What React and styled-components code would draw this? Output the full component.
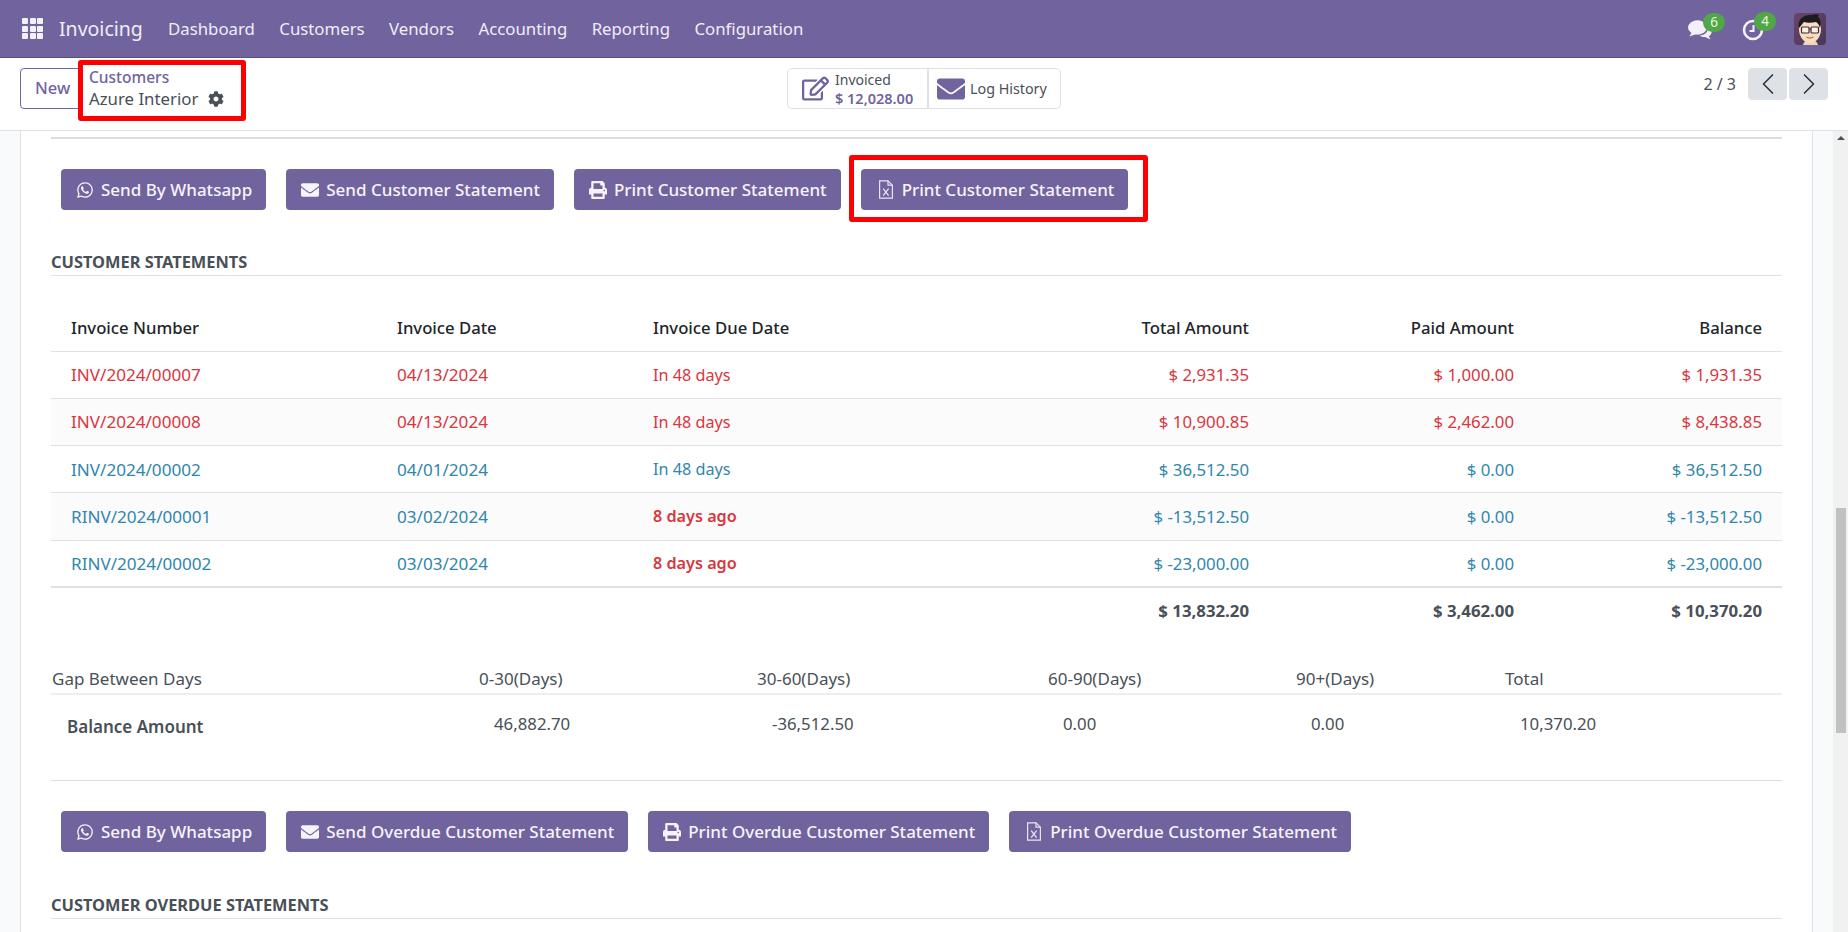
import React from "react";
import styled, { createGlobalStyle } from "styled-components";
import { FaWhatsapp, FaEnvelope, FaPrint, FaCog, FaRegEdit } from "react-icons/fa";
import { LuChevronLeft, LuChevronRight } from "react-icons/lu";

const PURPLE = "#71639e";
const RED = "#d9363e";
const BLUE = "#2f87ab";

const GlobalStyle = createGlobalStyle`
  html, body { margin: 0; padding: 0; height: 100%; overflow: hidden; background: #fff; }
  body { font-family: "Noto Sans", "Open Sans", sans-serif; color: #495057; }
  * { box-sizing: border-box; }
`;

const statementRows = [
  { no: "INV/2024/00007", date: "04/13/2024", due: "In 48 days", total: "$ 2,931.35", paid: "$ 1,000.00", balance: "$ 1,931.35", tone: RED },
  { no: "INV/2024/00008", date: "04/13/2024", due: "In 48 days", total: "$ 10,900.85", paid: "$ 2,462.00", balance: "$ 8,438.85", tone: RED },
  { no: "INV/2024/00002", date: "04/01/2024", due: "In 48 days", total: "$ 36,512.50", paid: "$ 0.00", balance: "$ 36,512.50", tone: BLUE },
  { no: "RINV/2024/00001", date: "03/02/2024", due: "8 days ago", late: true, total: "$ -13,512.50", paid: "$ 0.00", balance: "$ -13,512.50", tone: BLUE },
  { no: "RINV/2024/00002", date: "03/03/2024", due: "8 days ago", late: true, total: "$ -23,000.00", paid: "$ 0.00", balance: "$ -23,000.00", tone: BLUE },
];

const gapHeads = ["0-30(Days)", "30-60(Days)", "60-90(Days)", "90+(Days)", "Total"];
const gapValues = ["46,882.70", "-36,512.50", "0.00", "0.00", "10,370.20"];

const ExcelIcon = () => (
  <ExcelSvg width="16" height="19" viewBox="0 0 16 19" fill="none" stroke="#e8e5f1" strokeWidth="1.2">
    <path d="M1.6 .8h8.4l4.4 4.4v13h-12.8z" />
    <path d="M10 .8v4.4h4.4" />
    <path d="M5.2 8.6l5.4 7M10.6 8.6l-5.4 7" strokeWidth="1.3" />
  </ExcelSvg>
);

const ChatIcon = () => (
  <svg width="24" height="20" viewBox="0 0 24 20" fill="#f3f0f8">
    <ellipse cx="9.5" cy="7.5" rx="9.5" ry="7.2" />
    <path d="M4 12l-2.6 4.4 7-2.4z" />
    <path d="M19 6.8c2.8 1 4.6 3 4.6 5.2 0 1.7-1 3.1-2.7 4.2l1.6 3.2-5.4-2.4c-2.2 0-4.2-.6-5.6-1.6 5 .2 9.4-3.2 7.5-8.4z" />
  </svg>
);

const ClockIcon = () => (
  <svg width="22" height="22" viewBox="0 0 22 22" fill="none" stroke="#f3f0f8">
    <circle cx="11" cy="11" r="9" strokeWidth="2.6" />
    <path d="M11.5 6v6H7.5" strokeWidth="2" />
  </svg>
);

const AvatarDrawing = () => (
  <svg width="32" height="32" viewBox="0 0 32 32">
    <defs>
      <linearGradient id="avatarBg" x1="0" y1="0" x2="1" y2="1">
        <stop offset="0" stopColor="#6b4468" />
        <stop offset="1" stopColor="#4a3658" />
      </linearGradient>
    </defs>
    <rect width="32" height="32" rx="4" fill="url(#avatarBg)" />
    <path d="M9 32c1-4 3-5 7-5s7 1 8 5z" fill="#f4d2b6" />
    <path d="M5 16c0-6 4-9 11-9s11 3 11 9c0 8-5 14-11 14S5 24 5 16z" fill="#fadcc2" />
    <path d="M5 15C3 7 9 1 18 2c2-1 5-1 7 0l-1 2c3 2 3 7 2 11-1-3-2-5-4-6-4 1-9 1-12 0-2 2-3 4-5 6z" fill="#1d1b1e" />
    <g fill="#fff" fillOpacity=".6" stroke="#33302f" strokeWidth="1.2">
      <rect x="7.5" y="14" width="7.5" height="6" rx="1" />
      <rect x="17" y="14" width="7.5" height="6" rx="1" />
    </g>
    <path d="M15 16h2" stroke="#33302f" strokeWidth="1" />
    <path d="M12.5 24c2 1.4 5 1.4 7 0" stroke="#a4552f" strokeWidth="1" fill="none" />
  </svg>
);

const ActionBar = ({ labels }) => (
  <ButtonRow>
    <ActionButton><FaWhatsapp size={18} />Send By Whatsapp</ActionButton>
    <ActionButton><FaEnvelope size={18} />{labels[0]}</ActionButton>
    <ActionButton><FaPrint size={18} />{labels[1]}</ActionButton>
    <ActionButton $highlight={labels[3]}><ExcelIcon />{labels[2]}</ActionButton>
  </ButtonRow>
);

const App = () => {
  return (
    <Page>
      <GlobalStyle />
      <Navbar>
        <AppsGrid>
          {Array.from({ length: 9 }).map((_, i) => <i key={i} />)}
        </AppsGrid>
        <Brand>Invoicing</Brand>
        <Menu>
          {["Dashboard", "Customers", "Vendors", "Accounting", "Reporting", "Configuration"].map((m) => (
            <MenuItem key={m}>{m}</MenuItem>
          ))}
        </Menu>
        <Systray>
          <TrayIcon $w={38}><ChatIcon /><Badge $left={15}>6</Badge></TrayIcon>
          <TrayIcon $w={36}><ClockIcon /><Badge $left={12}>4</Badge></TrayIcon>
          <Avatar><AvatarDrawing /></Avatar>
        </Systray>
      </Navbar>

      <ControlPanel>
        <PanelLeft>
          <NewButton>New</NewButton>
          <Breadcrumb>
            <CrumbLink>Customers</CrumbLink>
            <CrumbCurrent>Azure Interior <FaCog size={16} /></CrumbCurrent>
          </Breadcrumb>
        </PanelLeft>
        <StatGroup>
          <StatButton $w={139} $pad={14} $gap={6}>
            <FaRegEdit size={27} color={PURPLE} />
            <StatText>
              <span>Invoiced</span>
              <strong>$ 12,028.00</strong>
            </StatText>
          </StatButton>
          <StatButton $w={133} $pad={8} $gap={5}>
            <FaEnvelope size={28} color={PURPLE} />
            <span>Log History</span>
          </StatButton>
        </StatGroup>
        <PanelRight>
          <PagerText>2 / 3</PagerText>
          <PagerButton><LuChevronLeft size={36} strokeWidth={1.1} /></PagerButton>
          <PagerButton><LuChevronRight size={36} strokeWidth={1.1} /></PagerButton>
        </PanelRight>
      </ControlPanel>

      <Main>
        <Gutter>
          <Sheet>
            <TopRule />
            <ActionBar labels={["Send Customer Statement", "Print Customer Statement", "Print Customer Statement", true]} />
            <SectionTitle>CUSTOMER STATEMENTS</SectionTitle>

            <StatementTable>
              <thead>
                <tr>
                  <HeadCell>Invoice Number</HeadCell>
                  <HeadCell>Invoice Date</HeadCell>
                  <HeadCell>Invoice Due Date</HeadCell>
                  <HeadCell $right>Total Amount</HeadCell>
                  <HeadCell $right>Paid Amount</HeadCell>
                  <HeadCell $right>Balance</HeadCell>
                </tr>
              </thead>
              <tbody>
                {statementRows.map((r) => (
                  <BodyRow key={r.no} $tone={r.tone}>
                    <TextCell>{r.no}</TextCell>
                    <TextCell>{r.date}</TextCell>
                    <DueCell $late={r.late}>{r.due}</DueCell>
                    <AmountCell>{r.total}</AmountCell>
                    <AmountCell>{r.paid}</AmountCell>
                    <AmountCell>{r.balance}</AmountCell>
                  </BodyRow>
                ))}
                <TotalRow>
                  <td colSpan={3} />
                  <AmountCell>$ 13,832.20</AmountCell>
                  <AmountCell>$ 3,462.00</AmountCell>
                  <AmountCell>$ 10,370.20</AmountCell>
                </TotalRow>
              </tbody>
            </StatementTable>

            <GapHead>
              <span>Gap Between Days</span>
              {gapHeads.map((h) => <span key={h}>{h}</span>)}
            </GapHead>
            <GapBody>
              <GapLabel>Balance Amount</GapLabel>
              {gapValues.map((v, i) => <GapValue key={i}>{v}</GapValue>)}
            </GapBody>

            <MidRule />
            <ActionBar labels={["Send Overdue Customer Statement", "Print Overdue Customer Statement", "Print Overdue Customer Statement"]} />
            <SectionTitle $second>CUSTOMER OVERDUE STATEMENTS</SectionTitle>
          </Sheet>
        </Gutter>
        <ScrollTrack>
          <ScrollArrow />
          <ScrollThumb />
        </ScrollTrack>
      </Main>
    </Page>
  );
};

export default App;

const Page = styled.div`
  display: flex;
  flex-direction: column;
  height: 100vh;
  overflow: hidden;
`;

const Navbar = styled.header`
  display: flex;
  align-items: center;
  flex: none;
  height: 58px;
  padding: 0 22px;
  background: ${PURPLE};
  border-bottom: 1px solid #5b4f82;
  color: #fff;
`;

const AppsGrid = styled.div`
  display: grid;
  grid-template-columns: repeat(3, 6px);
  grid-auto-rows: 6px;
  gap: 1.5px;
  margin-right: 16px;
  i { background: #f3f0f8; border-radius: 1px; }
`;

const Brand = styled.div`
  font-size: 19.5px;
  color: #f0edf6;
  width: 109px;
`;

const Menu = styled.nav`
  display: flex;
  gap: 24.4px;
`;

const MenuItem = styled.a`
  font-size: 16.8px;
  color: #f0edf6;
`;

const Systray = styled.div`
  display: flex;
  align-items: center;
  margin-left: auto;
`;

const TrayIcon = styled.div`
  position: relative;
  display: flex;
  align-items: center;
  width: ${(p) => p.$w}px;
  margin-right: 16px;
  padding-top: 3px;
`;

const Badge = styled.span`
  position: absolute;
  top: -4px;
  left: ${(p) => p.$left}px;
  width: 22px;
  height: 19px;
  border-radius: 10px;
  background: #4fa845;
  color: #e9f5e6;
  font-size: 13.5px;
  line-height: 19px;
  text-align: center;
`;

const Avatar = styled.div`
  width: 32px;
  height: 32px;
  svg { display: block; }
`;

const ControlPanel = styled.div`
  display: grid;
  grid-template-columns: 1fr auto 1fr;
  align-items: start;
  flex: none;
  height: 73px;
  padding: 10px 20px 0;
  background: #fff;
  border-bottom: 1px solid #dee2e6;
`;

const PanelLeft = styled.div`
  display: flex;
  align-items: flex-start;
`;

const NewButton = styled.button`
  width: 70px;
  height: 41px;
  padding: 0 0 2px 14px;
  text-align: left;
  background: #fff;
  border: 1px solid ${PURPLE};
  border-radius: 4px;
  color: ${PURPLE};
  font: 500 16.5px "Noto Sans", sans-serif;
`;

const Breadcrumb = styled.div`
  position: relative;
  display: flex;
  flex-direction: column;
  justify-content: center;
  width: 168px;
  height: 61px;
  margin: -8px 0 0 -12px;
  padding: 0 0 5px 6px;
  background: #fff;
  border: 5px solid #ff0000;
  border-radius: 3px;
`;

const CrumbLink = styled.span`
  font-size: 15.5px;
  font-weight: 500;
  line-height: 21px;
  color: ${PURPLE};
`;

const CrumbCurrent = styled.span`
  display: flex;
  align-items: center;
  gap: 10px;
  font-size: 16.8px;
  line-height: 21px;
  color: #495057;
`;

const StatGroup = styled.div`
  display: flex;
  height: 41px;
  border: 1px solid #dee2e6;
  border-radius: 5px;
`;

const StatButton = styled.div`
  display: flex;
  align-items: center;
  gap: ${(p) => p.$gap}px;
  width: ${(p) => p.$w}px;
  padding-left: ${(p) => p.$pad}px;
  font-size: 14.3px;
  color: #495057;
  & + & { border-left: 2px solid #dee2e6; }
`;

const StatText = styled.div`
  display: flex;
  flex-direction: column;
  line-height: 18px;
  font-size: 14px;
  strong { font-size: 14.5px; font-weight: 600; color: ${PURPLE}; }
`;

const PanelRight = styled.div`
  display: flex;
  align-items: center;
  justify-content: flex-end;
  gap: 2px;
`;

const PagerText = styled.span`
  margin-right: 10px;
  font-size: 16px;
  color: #495057;
`;

const PagerButton = styled.button`
  display: flex;
  align-items: center;
  justify-content: center;
  width: 39px;
  height: 32px;
  padding: 0;
  background: #dee2e6;
  border: 0;
  border-radius: 4px;
  color: #2b3642;
`;

const Main = styled.main`
  display: flex;
  flex: 1;
  min-height: 0;
`;

const Gutter = styled.div`
  flex: 1;
  min-width: 0;
  padding: 0 20px;
  background: #f9fafb;
  overflow: hidden;
`;

const Sheet = styled.div`
  height: 100%;
  padding: 6px 30px 0;
  background: #fff;
  border-left: 1px solid #dee2e6;
  border-right: 1px solid #dee2e6;
`;

const TopRule = styled.div`
  height: 2px;
  background: #dcdbe8;
`;

const MidRule = styled.div`
  height: 1px;
  background: #dcdbe8;
`;

const ButtonRow = styled.div`
  display: flex;
  gap: 20px;
  margin-top: 30px;
  padding-left: 10px;
`;

const ActionButton = styled.button`
  position: relative;
  display: flex;
  align-items: center;
  gap: 7px;
  height: 41px;
  padding: 0 14px 0 15px;
  background: ${PURPLE};
  border: 0;
  border-radius: 4px;
  color: #f6f4fa;
  font: 500 17px "Noto Sans", sans-serif;
  white-space: nowrap;
  ${(p) =>
    p.$highlight &&
    `&::after {
      content: "";
      position: absolute;
      inset: -14px -20px -12px -12px;
      border: 5px solid #ff0000;
      border-radius: 3px;
    }`}
`;

const ExcelSvg = styled.svg`
  margin: 0 1px 0 2px;
`;

const SectionTitle = styled.h3`
  margin: ${(p) => (p.$second ? "43px" : "42px")} 0 0;
  height: 24px;
  padding-bottom: 4px;
  border-bottom: 1px solid #dee2e6;
  font-size: 16.4px;
  font-weight: 700;
  line-height: 19px;
  color: #495057;
`;

const StatementTable = styled.table`
  width: 100%;
  border-collapse: collapse;
  table-layout: fixed;
  font-size: 16.8px;
  th:nth-child(1) { width: 326px; }
  th:nth-child(2) { width: 256px; }
  th:nth-child(3) { width: 371px; }
  th:nth-child(4) { width: 265px; }
  th:nth-child(5) { width: 265px; }
  th:nth-child(6) { width: 248px; }
  td { padding: 0 20px; }
`;

const HeadCell = styled.th`
  height: 75px;
  padding: 28px 20px 0;
  border-bottom: 1px solid #dee2e6;
  font-size: 16.7px;
  font-weight: 500;
  color: #212529;
  text-align: ${(p) => (p.$right ? "right" : "left")};
`;

const BodyRow = styled.tr`
  height: 47.25px;
  border-bottom: 1px solid #dee2e6;
  color: ${(p) => p.$tone};
  &:nth-child(even) { background: #fbfbfc; }
  &:nth-child(5) { border-bottom-width: 2px; }
`;

const TextCell = styled.td`
  font-size: 17.1px;
`;

const DueCell = styled.td`
  font-size: 16.2px;
  ${(p) => p.$late && `color: ${RED}; font-weight: 600;`}
`;

const AmountCell = styled.td`
  text-align: right;
`;

const TotalRow = styled.tr`
  height: 46px;
  font-weight: 700;
  color: #495057;
`;

const gapColumns = "428px 278px 291px 248px 209px 1fr";

const GapHead = styled.div`
  display: grid;
  grid-template-columns: ${gapColumns};
  align-items: center;
  height: 32px;
  margin-top: 30px;
  border-bottom: 2px solid #eceef1;
  font-size: 17px;
  color: #495057;
  span:first-child { padding-left: 1px; }
`;

const GapBody = styled.div`
  display: grid;
  grid-template-columns: ${gapColumns};
  align-items: center;
  height: 85px;
  padding-bottom: 28px;
`;

const GapLabel = styled.div`
  padding: 5px 0 0 16px;
  font-size: 17px;
  font-weight: 600;
  color: #495057;
`;

const GapValue = styled.div`
  padding-left: 15px;
  font-size: 16.8px;
  color: #495057;
`;

const ScrollTrack = styled.div`
  display: flex;
  flex-direction: column;
  align-items: center;
  flex: none;
  width: 15px;
  padding-top: 5px;
  background: #f1f1f1;
`;

const ScrollArrow = styled.div`
  width: 0;
  height: 0;
  border-left: 4px solid transparent;
  border-right: 4px solid transparent;
  border-bottom: 4px solid #505050;
`;

const ScrollThumb = styled.div`
  width: 10px;
  height: 225px;
  margin-top: 368px;
  background: #c1c1c1;
`;
